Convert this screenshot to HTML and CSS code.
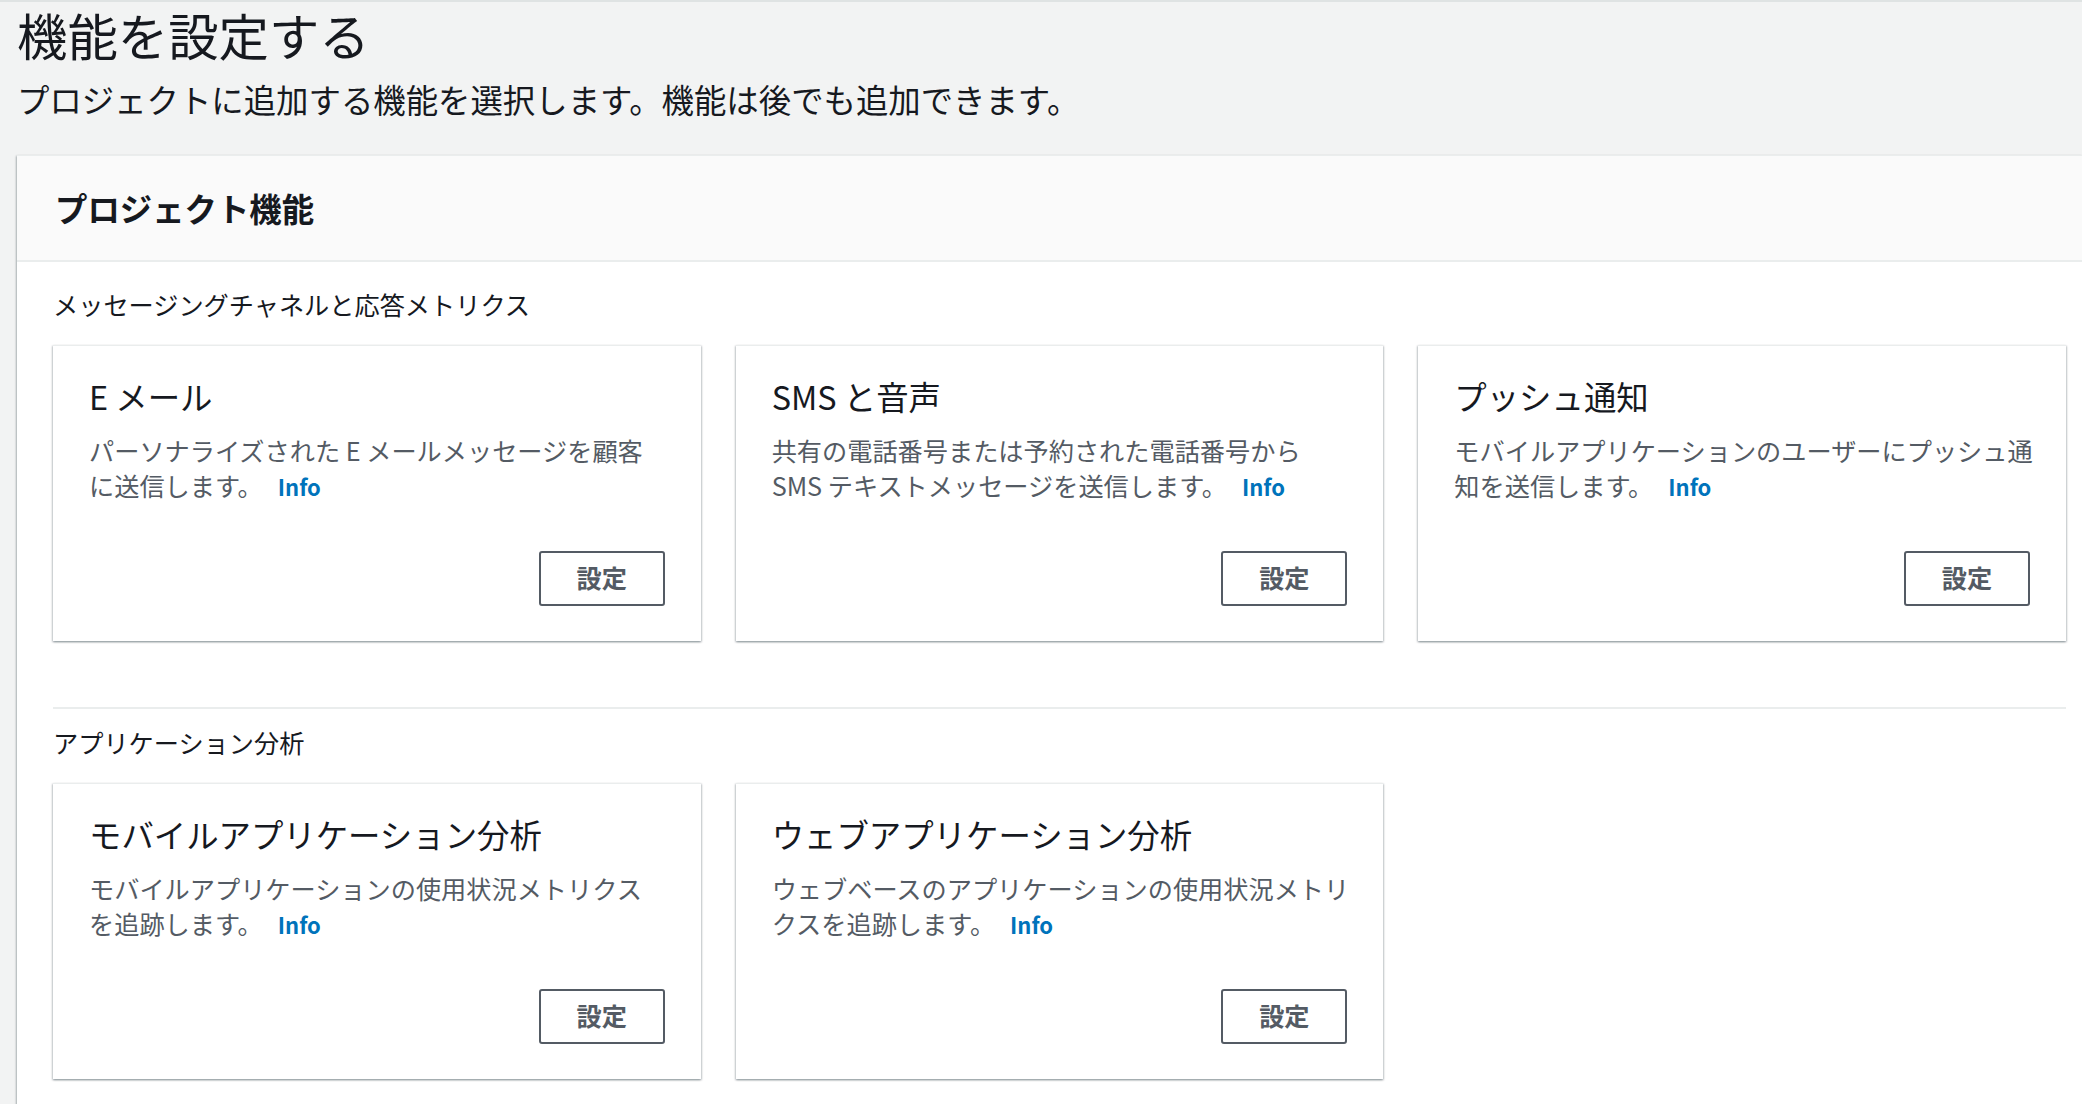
FILE: index.html
```html
<!DOCTYPE html>
<html lang="ja">
  <head>
    <meta charset="UTF-8" />
    <meta name="viewport" content="width=device-width, initial-scale=1.0" />
    <title>機能を設定する</title>
    <link rel="stylesheet" href="styles.css">
  </head>
  <body>
    <div class="page">
      <h1 class="page-title">機能を設定する</h1>
      <p class="page-desc">プロジェクトに追加する機能を選択します。機能は後でも追加できます。</p>

      <div class="panel">
        <div class="panel-header">
          <h2>プロジェクト機能</h2>
        </div>
        <div class="panel-body">
          <div class="section">
            <div class="section-label">メッセージングチャネルと応答メトリクス</div>
            <div class="cards">
              <div class="card">
                <div class="card-title">E メール</div>
                <div class="card-desc">パーソナライズされた E メールメッセージを顧客<br>に送信します。<a href="#" class="info">Info</a></div>
                <div class="card-actions"><button class="btn">設定</button></div>
              </div>
              <div class="card">
                <div class="card-title">SMS と音声</div>
                <div class="card-desc">共有の電話番号または予約された電話番号から<br>SMS テキストメッセージを送信します。<a href="#" class="info">Info</a></div>
                <div class="card-actions"><button class="btn">設定</button></div>
              </div>
              <div class="card">
                <div class="card-title">プッシュ通知</div>
                <div class="card-desc">モバイルアプリケーションのユーザーにプッシュ通<br>知を送信します。<a href="#" class="info">Info</a></div>
                <div class="card-actions"><button class="btn">設定</button></div>
              </div>
            </div>
          </div>

          <div class="section section-divided">
            <div class="section-label">アプリケーション分析</div>
            <div class="cards">
              <div class="card">
                <div class="card-title">モバイルアプリケーション分析</div>
                <div class="card-desc">モバイルアプリケーションの使用状況メトリクス<br>を追跡します。<a href="#" class="info">Info</a></div>
                <div class="card-actions"><button class="btn">設定</button></div>
              </div>
              <div class="card">
                <div class="card-title">ウェブアプリケーション分析</div>
                <div class="card-desc">ウェブベースのアプリケーションの使用状況メトリ<br>クスを追跡します。<a href="#" class="info">Info</a></div>
                <div class="card-actions"><button class="btn">設定</button></div>
              </div>
            </div>
          </div>
        </div>
      </div>
    </div>
  </body>
</html>
```

FILE: styles.css
```css
html,
body {
  margin: 0;
  height: 100%;
}
body {
  background-color: #f2f3f3;
  border-top: 2px solid #dfe3e3;
  box-sizing: border-box;
  overflow: hidden;
  font-family: "Noto Sans CJK JP", sans-serif;
  color: #16191f;
}
.page {
  padding-left: 17px;
}
.page-title {
  margin: 3px 0 0;
  font-size: 50.4px;
  line-height: 60px;
  font-weight: 400;
}
.page-desc {
  margin: 14px 0 0;
  font-size: 32.4px;
  line-height: 40px;
}
.panel {
  margin-top: 36px;
  min-height: 1000px;
  background-color: #fff;
  border-top: 1px solid #eaeded;
  box-shadow: 0 1px 2px rgba(0, 28, 36, 0.3), -1px 1px 2px rgba(0, 28, 36, 0.2);
}
.panel-header {
  background-color: #fafafa;
  border-bottom: 2px solid #eaeded;
  padding: 32px 36px 32px 38px;
}
.panel-header h2 {
  margin: 0;
  font-size: 32.4px;
  line-height: 40px;
  font-weight: 700;
}
.panel-body {
  padding: 0 16px 0 36px;
}
.section {
  padding-top: 25px;
}
.section-divided {
  margin-top: 66px;
  padding-top: 16px;
  border-top: 2px solid #eaeded;
}
.section-label {
  margin-bottom: 23px;
  font-size: 25.2px;
  line-height: 35px;
}
.cards {
  display: grid;
  grid-template-columns: repeat(3, minmax(0, 1fr));
  column-gap: 35px;
}
.card {
  display: flex;
  flex-direction: column;
  padding: 30px 36px 35px;
  background-color: #fff;
  border-top: 1px solid #eaeded;
  box-shadow: 0 1px 2px rgba(0, 28, 36, 0.3), 1px 1px 2px rgba(0, 28, 36, 0.15),
    -1px 1px 2px rgba(0, 28, 36, 0.15);
}
.card-title {
  margin-bottom: 17px;
  font-size: 32.4px;
  line-height: 40px;
}
.card-desc {
  margin-bottom: 47px;
  font-size: 25.2px;
  line-height: 35px;
  color: #545b64;
  white-space: nowrap;
}
.info {
  margin-left: 15px;
  font-size: 22px;
  font-weight: 700;
  color: #0073bb;
  text-decoration: none;
}
.card-actions {
  display: flex;
  justify-content: flex-end;
}
.btn {
  box-sizing: border-box;
  width: 126px;
  height: 55px;
  padding: 0 0 4px;
  border: 2px solid #545b64;
  border-radius: 3px;
  background-color: #fff;
  font-family: "Noto Sans CJK JP", sans-serif;
  font-size: 25.2px;
  line-height: 30px;
  font-weight: 700;
  color: #545b64;
}
```
